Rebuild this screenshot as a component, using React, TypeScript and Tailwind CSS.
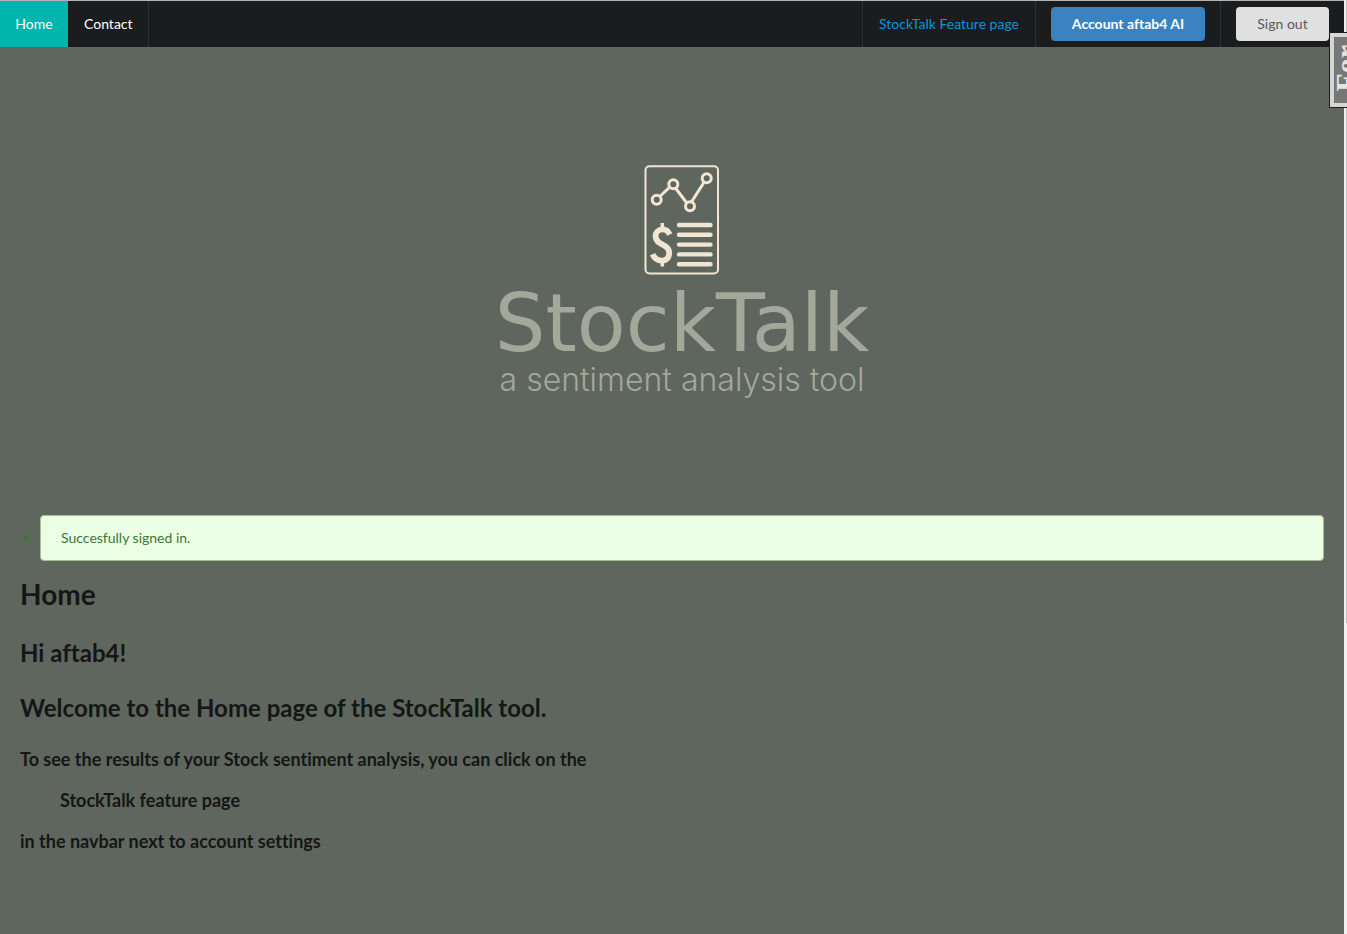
const menuText = 'flex items-center text-sm leading-[14px]';

function ReportIcon() {
  return (
    <svg
      viewBox="0 0 76 110"
      className="h-[110px] w-[76px]"
      fill="none"
      stroke="#f1e6d2"
      aria-hidden="true"
    >
      <rect x="1.5" y="1.2" width="72.5" height="107.3" rx="4" strokeWidth="2" />
      <g strokeWidth="3">
        <path d="M16.3 31 L25 22.8 M31.8 23.5 L42.4 37.5 M47.6 36.8 L59.8 17.6" />
        <circle cx="12.7" cy="34.8" r="4.5" />
        <circle cx="29.3" cy="19.2" r="4.5" />
        <circle cx="46" cy="41.2" r="4.5" />
        <circle cx="62.7" cy="13.2" r="4.5" />
      </g>
      <path
        d="M35 60H66.500M35 69.800H66.500M35 79.600H66.500M35 89.400H66.500M35 99.200H66.500"
        strokeWidth="4.4"
        strokeLinecap="round"
      />
      <path
        d="M25.800 69.500C24 65.800 21.500 64.200 18.300 64.400C13.900 64.700 11.400 67.800 11.600 71.500C11.800 75.800 15.100 78 18.600 79.600C22.900 81.500 25.300 83.800 25.200 88.300C25.100 92.800 22.400 95.600 17.900 95.600C13.400 95.600 10.300 93.200 8.500 89.300"
        strokeWidth="5.8"
      />
      <path d="M18.300 58V64M18.300 95V101.500" strokeWidth="3.600" />
    </svg>
  );
}

function Navbar() {
  return (
    <nav className="flex h-[47px] border-t border-[#b4b4b4] bg-[#1b1c1d] text-white">
      <a href="#home" className={`${menuText} w-[68px] justify-center bg-[#00b5ad]`}>
        Home
      </a>
      <a href="#contact" className={`${menuText} border-r border-[#2d2e2f] pr-[15px] pl-4`}>
        Contact
      </a>
      <div className="ml-auto flex">
        <a
          href="#feature"
          className={`${menuText} border-l border-[#2d2e2f] px-4 text-[#0d95dc]`}
        >
          StockTalk Feature page
        </a>
        <div className="flex items-center border-x border-[#2d2e2f] px-[15px]">
          <button
            type="button"
            className="h-[34px] w-[154px] rounded bg-[#3b83c0] text-sm font-bold text-white"
          >
            Account aftab4 AI
          </button>
        </div>
        <div className="flex items-center px-[15px]">
          <button
            type="button"
            className="h-[34px] w-[93px] rounded bg-[#e0e0e0] text-sm text-[#5a5a5a]"
          >
            Sign out
          </button>
        </div>
      </div>
    </nav>
  );
}

export default function App() {
  return (
    <div className="relative flex min-h-screen overflow-hidden bg-[#5f665d] font-['Lato',sans-serif] [font-variant-ligatures:none]">
      <div className="min-w-0 flex-1">
        <Navbar />
        <header className="flex flex-col items-center pt-[118px] pl-5 text-[#a4a89b]">
          <ReportIcon />
          <div className="mt-1 font-['DejaVu_Sans',sans-serif] text-[80px] leading-[90px]">
            StockTalk
          </div>
          <div className="font-['Inter',sans-serif] text-[32px] leading-[22px] font-light">
            a sentiment analysis tool
          </div>
        </header>
        <main className="px-5 pt-[124px] text-[#151616]">
          <ul className="list-disc pl-5 text-sm text-[#3c763d] marker:text-[#3c763d]">
            <li>
              <div className="rounded border border-[#a3c293] bg-[#ebffe5] px-5 py-3">
                Succesfully signed in.
              </div>
            </li>
          </ul>
          <h1 className="mt-4 text-[28px] leading-[34px] font-bold">Home</h1>
          <h2 className="mt-[26px] text-2xl leading-[31px] font-bold">Hi aftab4!</h2>
          <h2 className="mt-6 text-2xl leading-[31px] font-bold">
            Welcome to the Home page of the StockTalk tool.
          </h2>
          <h3 className="mt-6 text-lg leading-6 font-bold">
            To see the results of your Stock sentiment analysis, you can click on the
          </h3>
          <h3 className="mt-[17px] pl-10 text-lg leading-6 font-bold">StockTalk feature page</h3>
          <h3 className="mt-[17px] text-lg leading-6 font-bold">
            in the navbar next to account settings
          </h3>
        </main>
      </div>
      <div className="w-[3px] bg-[#f0f0f0]">
        <div className="ml-auto h-[623px] w-px bg-[#c1c1c1]" />
      </div>
      <div className="absolute top-8 right-0 flex h-[76px] w-[18px] border border-r-0 border-[#1b1c1d] bg-[#d6d7d5] py-1 pl-1">
        <div className="flex flex-1 items-center overflow-hidden bg-[#777] pb-1">
          <span className="rotate-180 font-['Liberation_Serif',serif] text-[30px] leading-6 font-bold text-[#e4e4e4] [writing-mode:vertical-rl]">
            For
          </span>
        </div>
      </div>
    </div>
  );
}
